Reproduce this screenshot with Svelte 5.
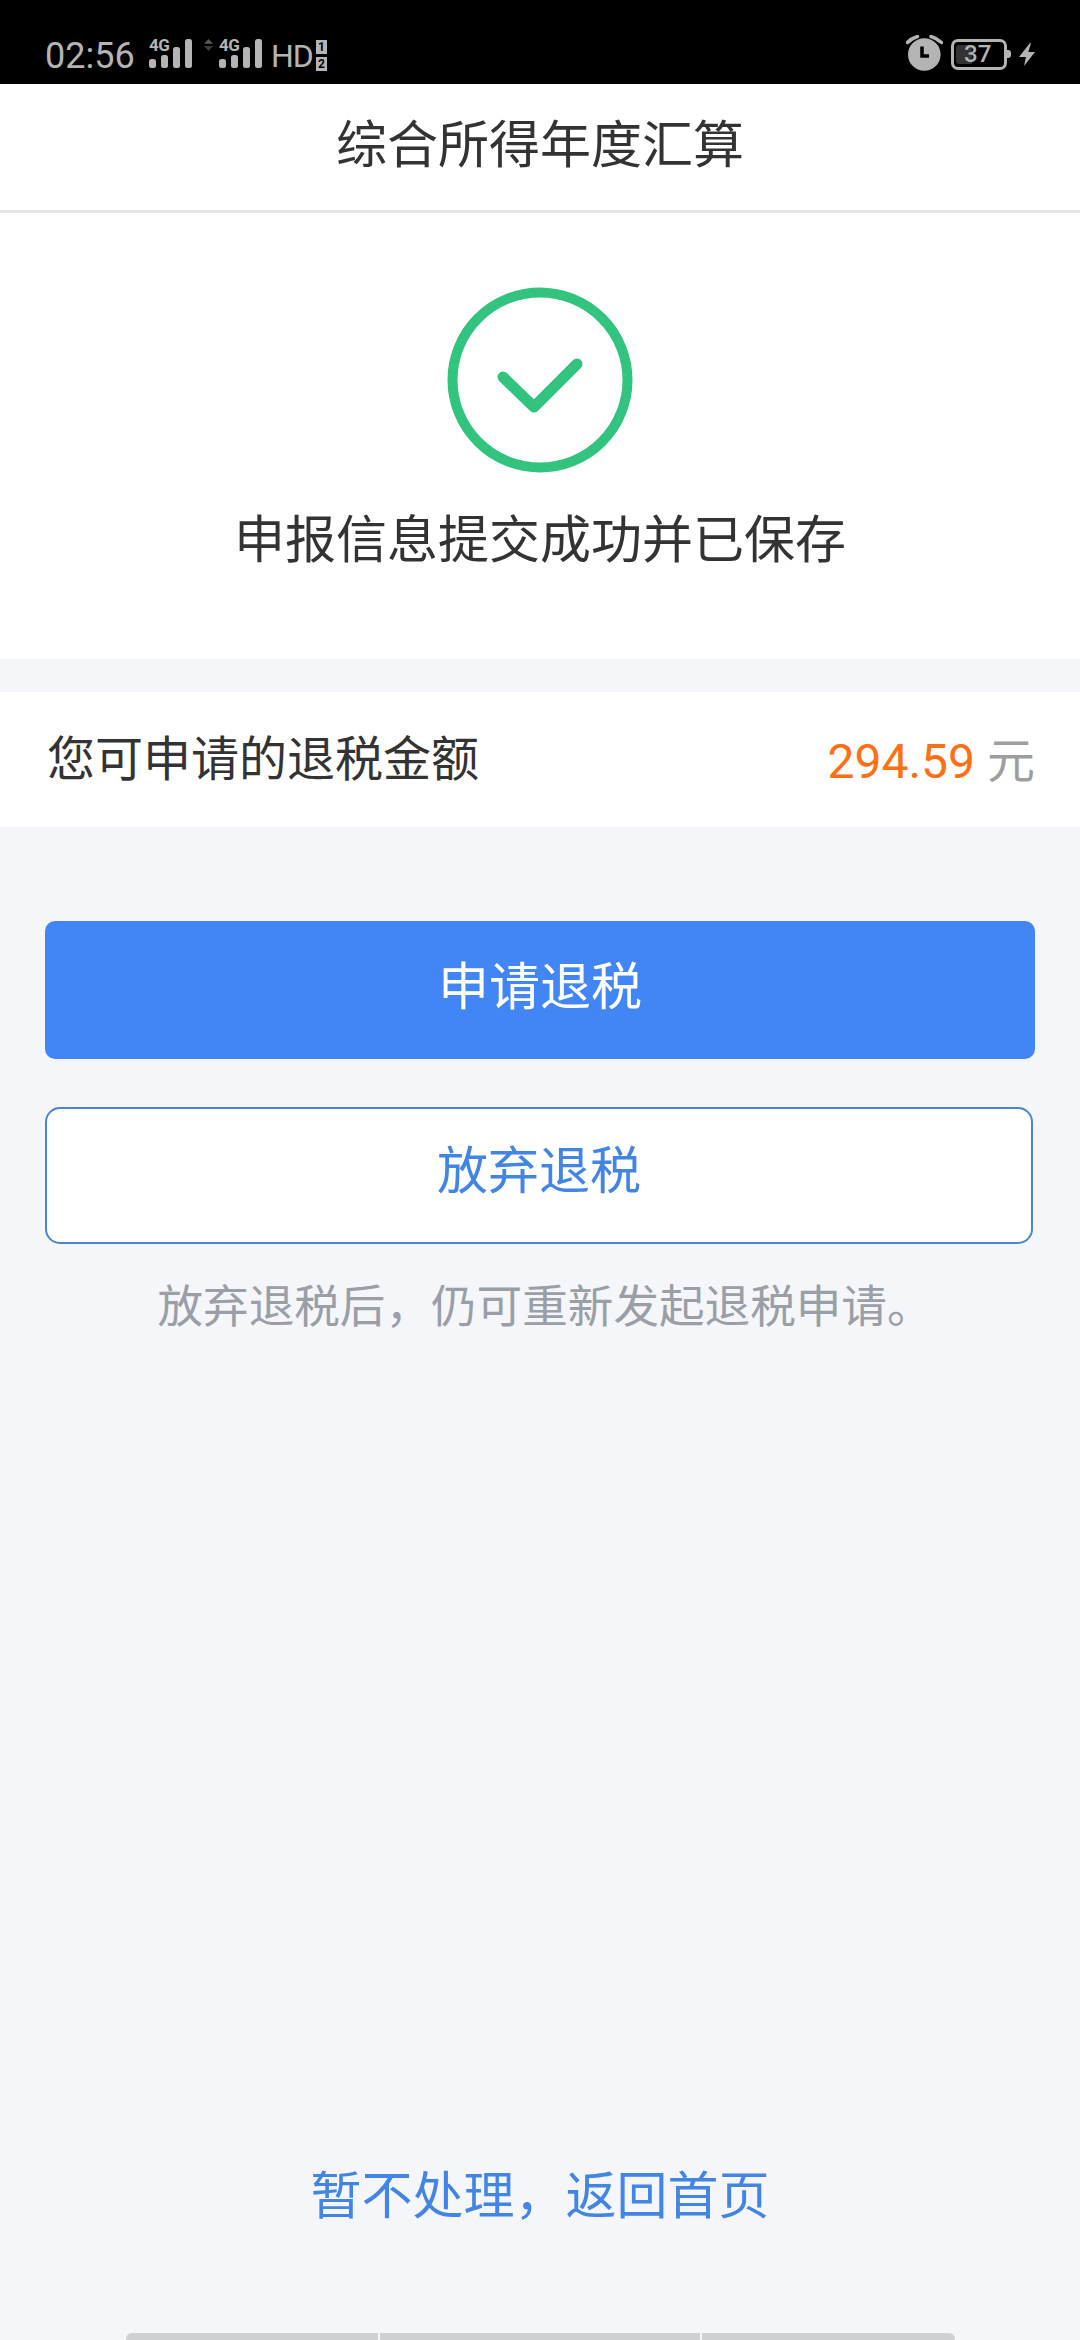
<script>
  const bars = [
    { x: 0, y: 20, h: 9 },
    { x: 12, y: 16, h: 13 },
    { x: 24, y: 8, h: 21 },
    { x: 36, y: 0, h: 29 }
  ];
</script>

<div class="page">
  <div class="status">
    <div class="left">
      <span class="time">02:56</span>
      <span class="signal first">
        <span class="net">4G</span>
        <svg width="43" height="29" viewBox="0 0 43 29">
          {#each bars as b}
            <rect x={b.x} y={b.y} width="7" height={b.h} rx="2.5" fill="#b4b4b4" />
          {/each}
        </svg>
      </span>
      <svg class="arrows" width="9" height="12" viewBox="0 0 9 12">
        <path d="M4.5 0 L9 4.7 H0 Z" fill="#5a5a5a" />
        <path d="M4.5 12 L9 7 H0 Z" fill="#3c3c3c" />
      </svg>
      <span class="signal second">
        <span class="net">4G</span>
        <svg width="43" height="29" viewBox="0 0 43 29">
          {#each bars as b}
            <rect x={b.x} y={b.y} width="7" height={b.h} rx="2.5" fill="#b4b4b4" />
          {/each}
        </svg>
      </span>
      <span class="hd">HD</span>
      <span class="sims"><span class="sim">1</span><span class="sim">2</span></span>
    </div>
    <div class="right">
      <svg width="37" height="36" viewBox="0 0 37 36">
        <circle cx="18.3" cy="19.5" r="16.3" fill="#b4b4b4" />
        <path d="M1.5 7.5 Q5.5 3.2 11.5 1.5 M35.5 7.5 Q31 3.2 25 1.5" stroke="#b4b4b4" stroke-width="3.5" fill="none" stroke-linecap="round" />
        <path d="M16 11.5 V21 H23" stroke="#000" stroke-width="3.5" fill="none" />
      </svg>
      <span class="battery"><span class="fill"></span><span class="level">37</span><span class="nub"></span></span>
      <svg class="bolt" width="16" height="23" viewBox="0 0 16 23">
        <path d="M11 0 L0 14 H7 L5 23 L16 9 H9.3 L12 0 Z" fill="#b4b4b4" />
      </svg>
    </div>
  </div>

  <header class="title">综合所得年度汇算</header>

  <section class="hero">
    <svg width="186" height="186" viewBox="0 0 186 186">
      <circle cx="93" cy="93" r="87.5" fill="none" stroke="#32c47e" stroke-width="10" />
      <path d="M56 90 L87 120 L130 77" fill="none" stroke="#32c47e" stroke-width="11" stroke-linecap="round" stroke-linejoin="round" />
    </svg>
    <p class="done">申报信息提交成功并已保存</p>
  </section>

  <section class="amount">
    <span class="label">您可申请的退税金额</span>
    <span class="value"><span class="num">294.59</span> <span class="unit">元</span></span>
  </section>

  <div class="actions">
    <button class="primary">申请退税</button>
    <button class="outline">放弃退税</button>
    <p class="note">放弃退税后，仍可重新发起退税申请。</p>
  </div>

  <a class="back" href="#top">暂不处理，返回首页</a>

  <div class="home">
    <span></span><span></span><span></span>
  </div>
</div>

<style>
  :global(body) {
    margin: 0;
    background: #f4f6fa;
  }
  .page {
    width: 1080px;
    height: 2340px;
    overflow: hidden;
    display: flex;
    flex-direction: column;
    background: #f4f6fa;
    font-family: Roboto, "Noto Sans CJK SC", sans-serif;
    color: #333;
  }
  .status {
    height: 84px;
    flex: none;
    box-sizing: border-box;
    background: #000;
    color: #b4b4b4;
    display: flex;
    justify-content: space-between;
    align-items: flex-end;
    padding: 0 45px 13px 45px;
  }
  .left, .right {
    display: flex;
    align-items: flex-end;
  }
  .time {
    font-size: 36px;
    line-height: 36px;
    width: 104px;
    margin-bottom: -3px;
  }
  .signal {
    position: relative;
    display: block;
    width: 43px;
    height: 29px;
    margin-bottom: 3px;
  }
  .signal svg { display: block; }
  .net {
    position: absolute;
    left: 0;
    top: -2px;
    font-size: 17px;
    line-height: 17px;
    font-weight: 700;
    letter-spacing: -0.5px;
  }
  .first { margin-right: 12px; }
  .arrows { margin: 0 6px 20px 0; }
  .second { margin-right: 9px; }
  .hd {
    font-size: 32px;
    line-height: 36px;
    margin-bottom: -3px;
    width: 45px;
    letter-spacing: -1px;
  }
  .sims {
    display: flex;
    flex-direction: column;
    gap: 3px;
  }
  .sim {
    width: 11px;
    height: 14px;
    background: #b4b4b4;
    color: #000;
    font-size: 12px;
    line-height: 14px;
    font-weight: 700;
    text-align: center;
  }
  .right svg { display: block; }
  .right > svg:first-child { margin-right: 8px; }
  .battery {
    position: relative;
    width: 56px;
    height: 31px;
    box-sizing: border-box;
    border: 3px solid #b4b4b4;
    border-radius: 7px;
    margin-right: 12px;
    margin-bottom: 1px;
    display: block;
  }
  .fill {
    position: absolute;
    left: 2px;
    top: 3px;
    bottom: 3px;
    width: 16px;
    border-radius: 3px 0 0 3px;
    background: #333;
  }
  .level {
    position: absolute;
    left: 10px;
    top: 0;
    font-size: 24px;
    line-height: 25px;
    font-weight: 500;
  }
  .nub {
    position: absolute;
    right: -7px;
    top: 8px;
    width: 4px;
    height: 8px;
    background: #b4b4b4;
    border-radius: 0 3px 3px 0;
  }
  .bolt { margin-bottom: 5px; }

  .title {
    height: 129px;
    flex: none;
    box-sizing: border-box;
    background: #fff;
    border-bottom: 3px solid #e4e4e6;
    display: flex;
    align-items: center;
    justify-content: center;
    font-size: 51px;
    color: #333;
    padding-bottom: 12px;
  }
  .hero {
    height: 446px;
    flex: none;
    box-sizing: border-box;
    background: #fff;
    display: flex;
    flex-direction: column;
    align-items: center;
    padding-top: 74px;
  }
  .hero svg { display: block; }
  .done {
    margin: 38px 0 0;
    font-size: 51px;
    line-height: 60px;
    color: #333;
  }
  .amount {
    margin-top: 33px;
    height: 135px;
    flex: none;
    box-sizing: border-box;
    background: #fff;
    display: flex;
    align-items: center;
    justify-content: space-between;
    padding: 0 45px 0 47px;
  }
  .label { font-size: 48px; color: #333; padding-bottom: 10px; }
  .value { font-size: 48px; white-space: pre; padding-bottom: 6px; }
  .num { color: #ff6f16; }
  .unit { color: #9e9e9e; }
  .actions {
    margin-top: 94px;
    padding: 0 45px;
    display: flex;
    flex-direction: column;
    align-items: flex-start;
  }
  button {
    font-family: inherit;
    font-size: 51px;
    padding: 0 0 14px;
    box-sizing: border-box;
    display: block;
  }
  .primary {
    width: 990px;
    height: 138px;
    background: #4285f4;
    color: #fff;
    border: 0;
    border-radius: 10px;
  }
  .outline {
    margin-top: 48px;
    width: 988px;
    height: 137px;
    background: #fff;
    color: #4285e4;
    border: 2px solid #4d83d4;
    border-radius: 15px;
    padding-bottom: 18px;
  }
  .note {
    margin: 38px 0 0;
    width: 990px;
    box-sizing: border-box;
    padding-left: 10px;
    text-align: center;
    font-size: 45.6px;
    line-height: 52px;
    color: #9a9ea6;
  }
  .back {
    margin-top: auto;
    margin-bottom: 102px;
    text-align: center;
    font-size: 51px;
    line-height: 68px;
    color: #4285e4;
    text-decoration: none;
  }
  .home {
    margin-left: 126px;
    width: 829px;
    height: 7px;
    flex: none;
    display: flex;
    gap: 2px;
  }
  .home span {
    background: #cfd0d4;
    flex: 252 0 0;
  }
  .home span:nth-child(1) { border-radius: 6px 0 0 0; }
  .home span:nth-child(2) { flex-grow: 320; }
  .home span:nth-child(3) { flex-grow: 253; border-radius: 0 6px 0 0; }
</style>
